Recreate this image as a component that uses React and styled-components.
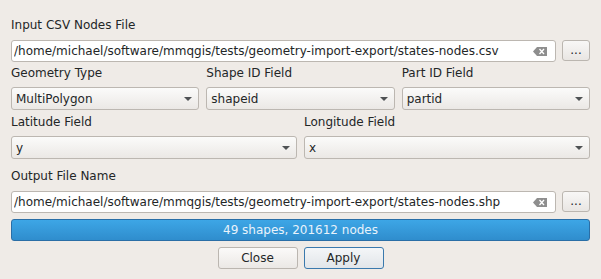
import React from 'react'
import styled, { createGlobalStyle } from 'styled-components'

const GlobalStyle = createGlobalStyle`
  html, body {
    margin: 0;
    padding: 0;
    background: #efebe7;
  }
  body {
    font-family: "DejaVu Sans", "Liberation Sans", sans-serif;
    font-size: 12px;
    color: #232627;
  }
`

const Dialog = styled.div`
  width: 601px;
  height: 279px;
  box-sizing: border-box;
  padding: 18px 11px 0 11px;
  display: flex;
  flex-direction: column;
`

const Label = styled.div`
  height: 14px;
  line-height: 14px;
  white-space: nowrap;
  margin-top: ${props => props.$top || 0}px;
`

const FileRow = styled.div`
  display: flex;
  gap: 6px;
  margin-top: ${props => props.$top || 0}px;
`

const LineEdit = styled.div`
  flex: 1;
  height: 22px;
  box-sizing: border-box;
  background: #ffffff;
  border: 1px solid #bcb7b1;
  border-radius: 3px;
  display: flex;
  align-items: center;
  padding: 0 8px 0 2px;
`

const LineText = styled.span`
  flex: 1;
  white-space: nowrap;
  overflow: hidden;
`

const BrowseButton = styled.div`
  width: 28px;
  height: 21px;
  box-sizing: border-box;
  border: 1px solid #bbb6b0;
  border-radius: 3px;
  background: linear-gradient(#f8f7f6, #e9e6e3);
  display: flex;
  align-items: center;
  justify-content: center;
  font-size: 12px;
  line-height: 1;
  padding-bottom: 2px;
`

const ComboGrid = styled.div`
  display: grid;
  grid-template-columns: repeat(${props => props.$cols}, 1fr);
  column-gap: 7px;
  margin-top: ${props => props.$top || 0}px;
`

const Combo = styled.div`
  height: 23px;
  box-sizing: border-box;
  border: 1px solid #bcb7b1;
  border-radius: 3px;
  background: linear-gradient(#fbfbfa, #ebe8e5);
  display: flex;
  align-items: center;
  padding: 0 5px 0 4px;
  margin-top: 7px;
`

const ComboText = styled.span`
  flex: 1;
  white-space: nowrap;
`

const Arrow = styled.span`
  width: 0;
  height: 0;
  border-left: 4px solid transparent;
  border-right: 4px solid transparent;
  border-top: 4px solid #4f5254;
  margin-right: 1px;
`

const Progress = styled.div`
  height: 22px;
  box-sizing: border-box;
  margin-top: 6px;
  border: 1px solid #2a6ea6;
  border-radius: 3px;
  background: linear-gradient(#3da6e6, #2f8dcd);
  color: #e9f3fb;
  display: flex;
  align-items: center;
  justify-content: center;
`

const ButtonRow = styled.div`
  display: flex;
  justify-content: center;
  gap: 6px;
  margin-top: 6px;
`

const PushButton = styled.div`
  width: 80px;
  height: 22px;
  box-sizing: border-box;
  border: 1px solid ${props => (props.$default ? '#3a79ad' : '#bbb6b0')};
  border-radius: 3px;
  background: ${props =>
    props.$default
      ? 'linear-gradient(#f4f6f8, #e1e5e9)'
      : 'linear-gradient(#fbfaf9, #ebe8e5)'};
  display: flex;
  align-items: center;
  justify-content: center;
`

const ClearIcon = () => (
  <svg width="14" height="9" viewBox="0 0 14 9">
    <path d="M4 0 H14 V9 H4 L0 4.5 Z" fill="#8e8e8e" />
    <path d="M6.5 2 L11 7 M11 2 L6.5 7" stroke="#fff" strokeWidth="1.3" />
  </svg>
)

const FileField = ({ label, value, top }) => (
  <>
    <Label $top={top}>{label}</Label>
    <FileRow $top={8}>
      <LineEdit>
        <LineText>{value}</LineText>
        <ClearIcon />
      </LineEdit>
      <BrowseButton>...</BrowseButton>
    </FileRow>
  </>
)

const ComboField = ({ label, value }) => (
  <div>
    <Label>{label}</Label>
    <Combo>
      <ComboText>{value}</ComboText>
      <Arrow />
    </Combo>
  </div>
)

const App = () => (
  <>
    <GlobalStyle />
    <Dialog>
      <FileField
        label="Input CSV Nodes File"
        value="/home/michael/software/mmqgis/tests/geometry-import-export/states-nodes.csv"
      />
      <ComboGrid $cols={3} $top={4}>
        <ComboField label="Geometry Type" value="MultiPolygon" />
        <ComboField label="Shape ID Field" value="shapeid" />
        <ComboField label="Part ID Field" value="partid" />
      </ComboGrid>
      <ComboGrid $cols={2} $top={5}>
        <ComboField label="Latitude Field" value="y" />
        <ComboField label="Longitude Field" value="x" />
      </ComboGrid>
      <FileField
        top={10}
        label="Output File Name"
        value="/home/michael/software/mmqgis/tests/geometry-import-export/states-nodes.shp"
      />
      <Progress>49 shapes, 201612 nodes</Progress>
      <ButtonRow>
        <PushButton>Close</PushButton>
        <PushButton $default>Apply</PushButton>
      </ButtonRow>
    </Dialog>
  </>
)

export default App
